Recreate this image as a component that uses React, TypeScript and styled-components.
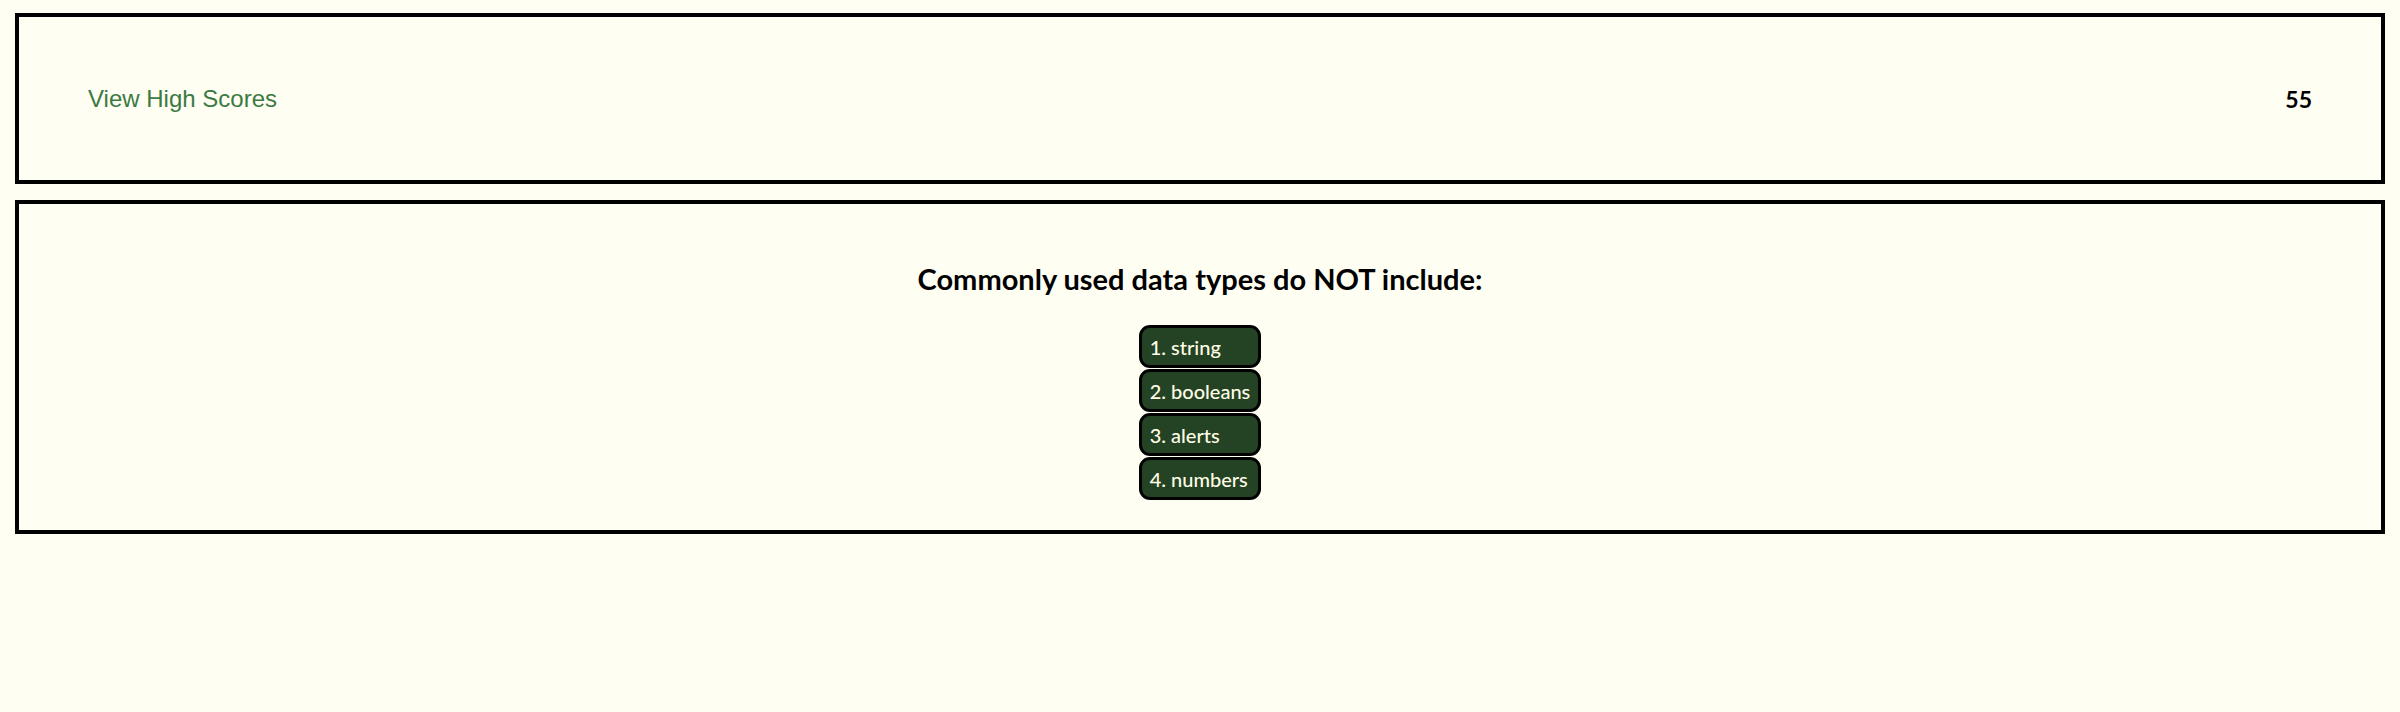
import React from 'react';
import styled, { createGlobalStyle } from 'styled-components';

const GlobalStyle = createGlobalStyle`
  html, body {
    margin: 0;
    padding: 0;
    background: #fefef2;
  }
  body {
    font-family: "Lato", "DejaVu Sans", sans-serif;
  }
`;

const CHOICES = ['string', 'booleans', 'alerts', 'numbers'];

const Page = styled.main`
  display: flex;
  flex-direction: column;
  gap: 16px;
  padding: 13px 15px;
`;

const Header = styled.header`
  display: flex;
  align-items: center;
  justify-content: space-between;
  height: 163px;
  padding: 0 69px;
  border: 4px solid #000;
`;

const HighScoresLink = styled.a`
  font-family: "Liberation Sans", Arial, sans-serif;
  font-size: 24px;
  color: #3b7a42;
  text-decoration: none;
  cursor: pointer;
`;

const Timer = styled.span`
  font-family: "Lato", sans-serif;
  font-weight: 700;
  font-size: 23px;
  color: #000;
`;

const QuizCard = styled.section`
  display: flex;
  flex-direction: column;
  align-items: center;
  padding: 57px 0 30px;
  border: 4px solid #000;
`;

const Question = styled.h2`
  margin: 0 0 29px;
  font-family: "Lato", sans-serif;
  font-weight: 700;
  font-size: 29px;
  line-height: 35px;
  color: #000;
`;

const ChoiceList = styled.div`
  display: flex;
  flex-direction: column;
  align-items: stretch;
  gap: 1px;
`;

const ChoiceButton = styled.button`
  height: 43px;
  padding: 0 8px;
  border: 3px solid #000;
  border-radius: 11px;
  background: #244324;
  color: #fffde6;
  font-family: "Lato", sans-serif;
  font-size: 20px;
  font-weight: 500;
  text-align: left;
  cursor: pointer;
`;

export default function App() {
  return (
    <>
      <GlobalStyle />
      <Page>
        <Header>
          <HighScoresLink>View High Scores</HighScoresLink>
          <Timer>55</Timer>
        </Header>
        <QuizCard>
          <Question>Commonly used data types do NOT include:</Question>
          <ChoiceList>
            {CHOICES.map((choice, i) => (
              <ChoiceButton key={choice}>
                {i + 1}. {choice}
              </ChoiceButton>
            ))}
          </ChoiceList>
        </QuizCard>
      </Page>
    </>
  );
}
